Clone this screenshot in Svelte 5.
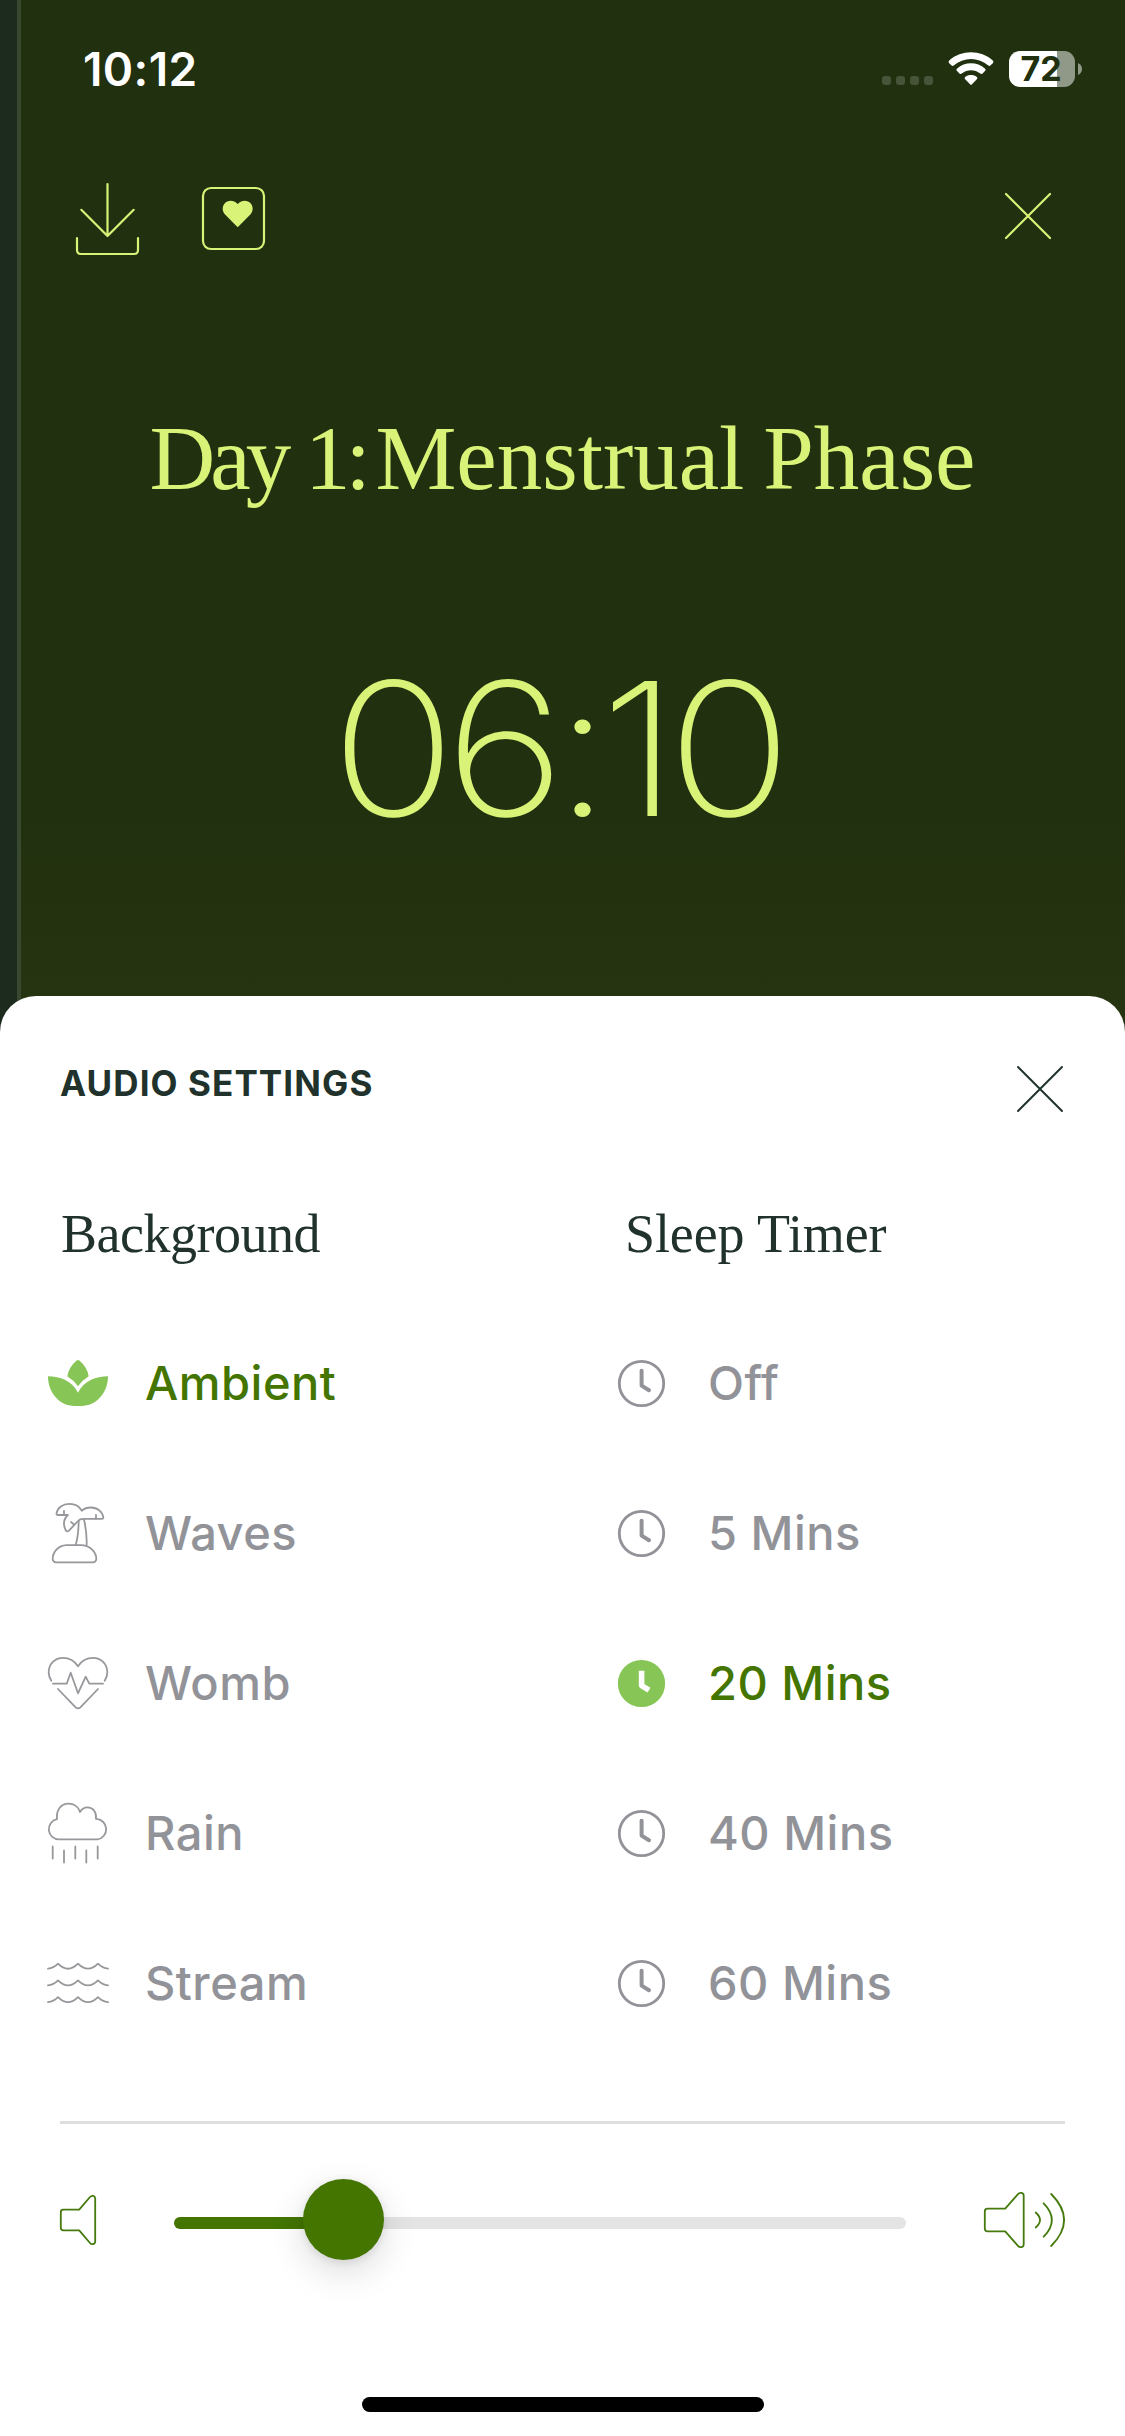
<script>
    let background = 'Ambient';
    let timer = '20 Mins';
    let volume = 23;

    const backgrounds = ['Ambient', 'Waves', 'Womb', 'Rain', 'Stream'];
    const timers = ['Off', '5 Mins', '20 Mins', '40 Mins', '60 Mins'];
</script>

<div class="screen">
    <section class="player">
        <div class="status-bar">
            <span class="clock">10:12</span>
            <div class="status-icons">
                <div class="signal"><i></i><i></i><i></i><i></i></div>
                <svg class="wifi" width="46" height="34" viewBox="0 0 46 34" fill="#fff">
                    <path d="M1.2 11.2 Q-.2 9.8 1.2 8.5 C13.5 -2.4 32.5 -2.4 44.8 8.5 Q46.2 9.8 44.8 11.2 L42.4 13.6 Q41.4 14.4 40.3 13.5 C30.5 4.8 15.5 4.8 5.7 13.5 Q4.6 14.4 3.6 13.6 Z" />
                    <path d="M8.8 18.8 Q7.8 17.8 8.9 16.7 C17 9.5 29 9.5 37.1 16.7 Q38.2 17.8 37.2 18.8 L34.3 21.7 Q33.3 22.5 32.3 21.6 C27 17 19 17 13.7 21.6 Q12.7 22.5 11.7 21.7 Z" />
                    <path d="M17 27.1 Q16 26 17.2 25 C20.5 22.4 25.5 22.4 28.8 25 Q30 26 29 27.1 L24 32.2 Q23 33.2 22 32.2 Z" />
                </svg>
                <div class="battery">
                    <span class="level">72</span>
                    <svg width="4" height="12" viewBox="0 0 4 12"><path d="M0 0 Q4 2 4 6 Q4 10 0 12 Z" fill="#909987" /></svg>
                </div>
            </div>
        </div>

        <div class="toolbar">
            <div class="actions">
                <button aria-label="Download">
                    <svg width="63" height="72" viewBox="0 0 63 72">
                        <path d="M31.5 1 V53 M5.3 26.8 L31.5 53 L57.7 26.8 M1 55 V67 Q1 71 5 71 H58 Q62 71 62 67 V55" />
                    </svg>
                </button>
                <button aria-label="Favourite">
                    <svg width="63" height="63" viewBox="0 0 63 63">
                        <rect x="1" y="1" width="61" height="61" rx="8" />
                        <path class="heart" d="M34.9 39.6 L22.8 27.3 C20.2 24.4 20 19.5 22.6 16.5 C25.8 13 31.3 12.6 35.7 17 C40.1 12.6 45.6 13 48.8 16.5 C51.4 19.5 51.2 24.4 48.6 27.3 L36.5 39.6 Q35.7 40.4 34.9 39.6 Z" />
                    </svg>
                </button>
            </div>
            <button class="close" aria-label="Close">
                <svg width="46" height="46" viewBox="0 0 46 46"><path d="M1 1 L45 45 M45 1 L1 45" /></svg>
            </button>
        </div>

        <h1><span class="day">Day 1:</span> Menstrual Phase</h1>
        <div class="time">06:10</div>
    </section>

    <section class="sheet">
        <header>
            <h2>AUDIO SETTINGS</h2>
            <button aria-label="Close settings">
                <svg width="46" height="46" viewBox="0 0 46 46"><path d="M1 1 L45 45 M45 1 L1 45" /></svg>
            </button>
        </header>

        <div class="columns">
            <div class="column">
                <h3>Background</h3>
                <ul>
                    {#each backgrounds as name}
                        <li>
                            <button class="option" class:active={background === name} on:click={() => (background = name)}>
                                <svg class="icon" class:lotus={name === 'Ambient'} width="60" height="60" viewBox="0 0 60 60">
                                    {#if name === 'Ambient'}
                                        <path d="M28.6 7.6 Q30 6.3 31.4 7.6 Q39 14 40.7 23.3 Q34.5 27 30 33.3 Q25.5 27 19.3 23.3 Q21 14 28.6 7.6 Z" />
                                        <path d="M0 23.3 C12 23.5 24 27.5 30 39.7 C36 27.5 48 23.5 60 23.3 C60 40 48 53 33.5 53 H26.5 C12 53 0 40 0 23.3 Z" />
                                    {:else if name === 'Waves'}
                                        <path d="M19.5 12 H10 Q8.3 12 8.5 10.5 C9.3 4.5 15 .8 21.5 .8 C27 .8 31.5 3.5 33.7 7.7 C36.5 5.3 39.5 4.5 43 4.5 C49.5 4.5 54.6 9 55.3 14.3 Q55.4 15.9 53.8 15.9 H35 Q32 15.9 30 18 L21 27.6 Q18.8 29.4 17.6 27 C15 21.5 16 15.8 19.8 12" />
                                        <path d="M16 8 V11.5 M48 12 V15.5 M23 19 L26 21.5" />
                                        <path d="M30.7 17.7 Q30.5 32 27.8 41.8 M36 16.5 Q39.2 31 38.6 42.3" />
                                        <path d="M18.5 42.2 H34 C42 42.8 48.3 49 48.3 56 A3.3 3.3 0 0 1 45 59.3 H8 A3.3 3.3 0 0 1 4.7 56 C4.7 49 10 42.5 18.5 42.2 Z" />
                                    {:else if name === 'Womb'}
                                        <path d="M3.3 27.7 C1.3 24.5 .7 22 .7 19.5 C.7 11 7 4.8 15 4.8 C22 4.8 27 8.5 30 13.2 C33 8.5 38 4.8 45 4.8 C53 4.8 59.3 11 59.3 19.5 C59.3 22 58.7 24.5 56.7 27.7" />
                                        <path d="M5 30.7 H18.7 L22.7 19.7 L30 40.3 L37.7 23.7 L41.3 30.7 H55" />
                                        <path d="M10 36 L27.6 54.3 Q30 56.5 32.4 54.3 L50 36" />
                                    {:else if name === 'Rain'}
                                        <path d="M11.2 36.4 A10.2 10.2 0 0 1 9 16.2 C8 7 13 .7 20.5 .7 C26 .7 30.5 4 32 9 C34 5.8 36.5 4.4 39.5 4.4 C45 4.4 48.7 9 48 15.9 A10.3 10.3 0 0 1 49.3 36.4 Z" />
                                        <path d="M4.7 43.5 V55.5 M16 47.5 V59.5 M27.3 43.5 V55.5 M38.3 47.5 V59.5 M49.7 43.5 V55.5" />
                                    {:else}
                                        {#each [0, 16.7, 33.4] as y}
                                            <path transform="translate(0 {y})" d="M0 15.7 Q5.5 15.3 10 10.7 Q20 20.7 30 10.7 Q40 20.7 50 10.7 Q54.5 15.3 60 15.7" />
                                        {/each}
                                    {/if}
                                </svg>
                                <span>{name}</span>
                            </button>
                        </li>
                    {/each}
                </ul>
            </div>

            <div class="column timers">
                <h3>Sleep Timer</h3>
                <ul>
                    {#each timers as name}
                        <li>
                            <button class="option" class:active={timer === name} on:click={() => (timer = name)}>
                                <svg class="dial" width="47" height="47" viewBox="0 0 47 47">
                                    <circle cx="23.5" cy="23.5" r="22.2" />
                                    <path d="M23.6 10.8 V25.6 L31 30.2" />
                                </svg>
                                <span>{name}</span>
                            </button>
                        </li>
                    {/each}
                </ul>
            </div>
        </div>

        <hr />

        <div class="volume">
            <svg width="36" height="50" viewBox="0 0 36 50">
                <path d="M3.3 14.7 H19.2 L30 2 C31.8 -.1 35.2 .7 35.2 3.5 V46.5 C35.2 49.3 31.8 50.1 30 48 L19.2 35.3 H3.3 Q.8 35.3 .8 32.8 V17.2 Q.8 14.7 3.3 14.7 Z" />
            </svg>
            <div class="track">
                <div class="fill" style:width="{volume}%"></div>
                <div class="thumb" style:left="{volume}%"></div>
            </div>
            <svg width="81" height="56" viewBox="0 0 81 56">
                <path d="M3.6 16.6 H21.2 L34 2.2 C36 -.2 39.7 .8 39.7 3.8 V52.2 C39.7 55.2 36 56.2 34 53.8 L21.2 39.4 H3.6 Q.8 39.4 .8 36.6 V19.4 Q.8 16.6 3.6 16.6 Z" />
                <path d="M51.7 20.5 Q60.3 28 51.7 35.5 M59.7 11.3 Q76 28 59.7 44.7 M67.2 2 Q93 28 67.2 54" />
            </svg>
        </div>

        <div class="home-indicator"></div>
    </section>
</div>

<style>
    :global(body) {
        margin: 0;
        background: #fff;
    }
    .screen {
        width: 1125px;
        height: 2436px;
        overflow: hidden;
        display: flex;
        flex-direction: column;
        font-family: Inter, "Liberation Sans", sans-serif;
    }
    button {
        display: flex;
        padding: 0;
        border: none;
        background: none;
        font: inherit;
        color: inherit;
        cursor: pointer;
    }
    svg {
        display: block;
        flex: none;
        overflow: visible;
    }
    h1, h2, h3, ul, li {
        margin: 0;
        padding: 0;
        list-style: none;
        font-weight: 400;
        white-space: nowrap;
    }

    .player {
        box-sizing: border-box;
        height: 1036px;
        flex: none;
        border-left: 4px solid #384930;
        margin-left: 17px;
        box-shadow: -17px 0 0 #1d2b1f;
        background: linear-gradient(#21300e 0, #21300e 820px, #273412 1000px);
        color: #d9f378;
    }
    .status-bar {
        height: 138px;
        padding: 0 43px 0 62px;
        display: flex;
        align-items: center;
        justify-content: space-between;
        color: #fff;
    }
    .clock {
        font-size: 46px;
        font-weight: 600;
        letter-spacing: 0.4px;
    }
    .status-icons {
        display: flex;
        align-items: center;
    }
    .signal {
        display: flex;
        gap: 5px;
        margin: 23px 15px 0 0;
    }
    .signal i {
        width: 9px;
        height: 9px;
        border-radius: 3px;
        background: #485439;
    }
    .wifi {
        margin-right: 15px;
    }
    .battery {
        display: flex;
        align-items: center;
        gap: 3px;
    }
    .level {
        width: 66px;
        height: 36px;
        border-radius: 11px;
        background: linear-gradient(90deg, #fff 48px, #909987 48px);
        color: #21300e;
        font-size: 34px;
        font-weight: 700;
        line-height: 36px;
        text-align: center;
        text-indent: -2px;
    }
    .toolbar {
        height: 162px;
        padding: 0 74px 0 55px;
        display: flex;
        align-items: center;
        justify-content: space-between;
    }
    .toolbar svg {
        fill: none;
        stroke: #d9f378;
        stroke-width: 2.2;
        stroke-linecap: round;
        stroke-linejoin: round;
    }
    .toolbar svg .heart {
        fill: #d9f378;
        stroke: none;
    }
    .actions {
        display: flex;
        align-items: center;
        gap: 63px;
    }
    .actions button + button {
        margin-bottom: 2px;
    }
    .close {
        margin-bottom: 7px;
    }
    h1 {
        margin: 109px 21px 0 0;
        font-family: "Liberation Serif", serif;
        font-size: 91px;
        line-height: 100px;
        word-spacing: -4px;
        text-align: center;
    }
    .day {
        margin-right: -9px;
        letter-spacing: -5px;
        word-spacing: 1px;
    }
    .time {
        margin: 140px 34px 0 0;
        font-size: 186px;
        font-weight: 200;
        line-height: 200px;
        letter-spacing: -10px;
        text-align: center;
        transform: scaleX(1.11);
    }

    .sheet {
        box-sizing: border-box;
        height: 1440px;
        flex: none;
        margin-top: -40px;
        padding: 0 60px;
        border-radius: 36px 36px 0 0;
        background: #fff;
        display: flex;
        flex-direction: column;
        color: #20322b;
        z-index: 1;
    }
    header {
        height: 185px;
        padding-right: 2px;
        display: flex;
        align-items: center;
        justify-content: space-between;
    }
    header svg {
        stroke: #20322b;
        stroke-width: 2;
        stroke-linecap: round;
    }
    h2 {
        margin-bottom: 12px;
        font-size: 35px;
        font-weight: 700;
        letter-spacing: 1.1px;
    }
    .columns {
        display: grid;
        grid-template-columns: 570px 1fr;
        margin-left: -12px;
    }
    h3 {
        padding-left: 13px;
        font-family: "Liberation Serif", serif;
        font-size: 54px;
        line-height: 106px;
        height: 104px;
        letter-spacing: -0.5px;
    }
    .timers h3 {
        padding-left: 7px;
        letter-spacing: -0.1px;
    }
    ul {
        margin-top: 23px;
    }
    .option {
        height: 150px;
        align-items: center;
        gap: 37px;
        color: #929399;
        font-size: 47px;
        font-weight: 500;
        letter-spacing: 0.5px;
    }
    .option span {
        padding-bottom: 2px;
    }
    .timers .option {
        gap: 43px;
    }
    .option.active {
        color: #437500;
    }
    .icon {
        fill: none;
        stroke: #97989c;
        stroke-width: 1.8;
        stroke-linecap: round;
        stroke-linejoin: round;
    }
    .icon.lotus {
        fill: #97989c;
        stroke: none;
    }
    .active .icon.lotus {
        fill: #86c556;
    }
    .dial {
        fill: none;
        stroke: #929399;
        stroke-width: 2.8;
    }
    .dial path {
        stroke-width: 4;
        stroke-linecap: round;
        stroke-linejoin: round;
    }
    .active .dial circle {
        fill: #86c556;
        stroke: #86c556;
    }
    .active .dial path {
        stroke: #fff;
        stroke-width: 5.6;
        stroke-linecap: butt;
    }
    hr {
        width: 100%;
        height: 3px;
        margin: 63px 0 0;
        border: none;
        background: #dedede;
    }
    .volume {
        height: 192px;
        display: flex;
        align-items: center;
    }
    .volume svg {
        fill: none;
        stroke: #457a0c;
        stroke-width: 1.8;
        stroke-linecap: round;
        stroke-linejoin: round;
    }
    .track {
        position: relative;
        flex: 1;
        height: 12px;
        margin: 6px 78px 0;
        border-radius: 6px;
        background: #e4e4e4;
    }
    .fill {
        height: 12px;
        border-radius: 6px;
        background: #437500;
    }
    .thumb {
        position: absolute;
        top: -38px;
        width: 81px;
        height: 81px;
        margin-left: -39px;
        border-radius: 50%;
        background: #437500;
        box-shadow: 0 12px 36px rgba(0, 0, 0, 0.14), 0 2px 8px rgba(0, 0, 0, 0.1);
    }
    .home-indicator {
        width: 402px;
        height: 15px;
        margin: auto auto 24px;
        border-radius: 8px;
        background: #000;
    }
</style>
